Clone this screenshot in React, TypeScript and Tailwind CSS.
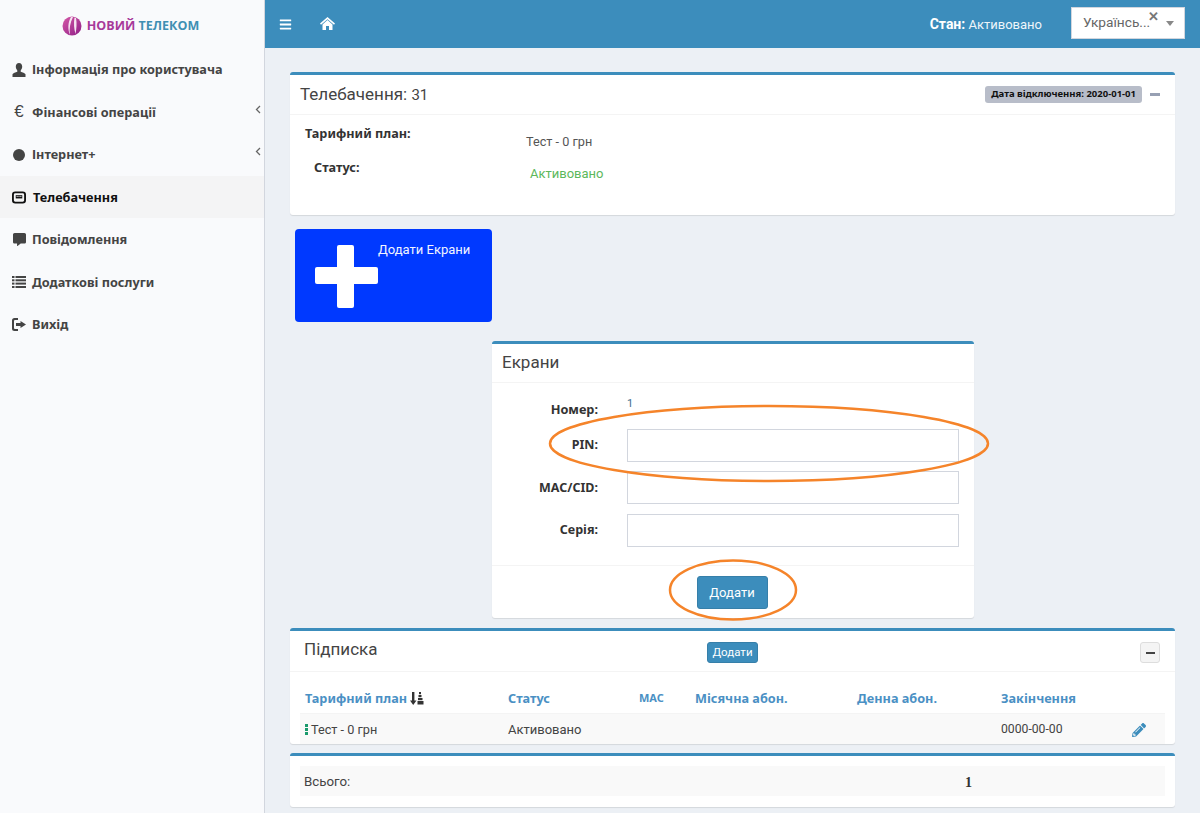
import React from "react";
import { FaBars, FaPencilAlt, FaCommentAlt } from "react-icons/fa";

const reg = "font-['Roboto',sans-serif]";
const bold = "font-['Noto_Sans','Open_Sans',sans-serif] font-bold";

function UserIcon() {
  return (
    <svg width="14" height="14" viewBox="0 0 14 14" fill="#444">
      <path d="M7 0c2 0 3.200 1.500 3.200 3.600 0 1.600-.7 3-1.500 3.800v1.300c1.600.6 4.300 1.300 4.800 2.600V14H.5v-2.700c.5-1.300 3.200-2 4.800-2.600V7.400C4.500 6.600 3.800 5.200 3.800 3.600 3.800 1.500 5 0 7 0z" />
    </svg>
  );
}
function TvIcon() {
  return (
    <svg width="15" height="13" viewBox="0 0 15 13" fill="none">
      <rect x="1" y="1" width="13" height="11" rx="2.500" stroke="#111" strokeWidth="2" />
      <rect x="4" y="4" width="7" height="3.500" fill="#111" />
      <rect x="5" y="4.800" width="1" height="1.200" fill="#f4f4f5" />
      <rect x="7" y="4.800" width="1" height="1.200" fill="#f4f4f5" />
      <rect x="9" y="4.800" width="1" height="1.200" fill="#f4f4f5" />
    </svg>
  );
}
function LogoutIcon() {
  return (
    <svg width="14" height="13" viewBox="0 0 14 13" fill="#444">
      <path d="M2.500 0H6v2H3a1 1 0 0 0-1 1v7a1 1 0 0 0 1 1h3v2H2.500A2.500 2.500 0 0 1 0 10.500v-8A2.500 2.500 0 0 1 2.500 0z" />
      <path d="M8.500 3 14 6.500 8.500 10V8H4V5h4.500z" />
    </svg>
  );
}
function ListIcon() {
  return (
    <svg width="14" height="12" viewBox="0 0 14 12" fill="#444">
      <rect x="0" y="0" width="2.500" height="2" />
      <rect x="3.500" y="0" width="10.500" height="2" />
      <rect x="0" y="3.300" width="2.500" height="2" />
      <rect x="3.500" y="3.300" width="10.500" height="2" />
      <rect x="0" y="6.600" width="2.500" height="2" />
      <rect x="3.500" y="6.600" width="10.500" height="2" />
      <rect x="0" y="10" width="2.500" height="2" />
      <rect x="3.500" y="10" width="10.500" height="2" />
    </svg>
  );
}
function HomeIcon() {
  return (
    <svg width="15" height="13" viewBox="0 0 15 13" fill="#fff">
      <path d="M7.500 0 15 6.600 14 7.800 7.500 2.200 1 7.800 0 6.600z" />
      <path d="M2.500 7.400 7.500 3.100 12.500 7.400V13H9V9H6v4H2.500z" />
    </svg>
  );
}
function SortIcon() {
  return (
    <svg width="14" height="13" viewBox="0 0 14 13" fill="#333">
      <path d="M2 0h2.400v8.500H6.500L3.200 13 0 8.500h2z" />
      <rect x="9" y="0" width="2" height="2.200" />
      <rect x="8.500" y="3" width="3" height="2.200" />
      <rect x="8" y="6" width="4.500" height="2.200" />
      <rect x="7.500" y="9" width="6" height="3.500" />
    </svg>
  );
}

const menu: { label: string; icon: React.ReactNode; chevron?: boolean; active?: boolean }[] = [
  { label: "Інформація про користувача", icon: <UserIcon /> },
  { label: "Фінансові операції", icon: <span className="font-['Liberation_Sans',sans-serif] font-normal text-[17px] leading-none text-[#444] -mt-[2px]">€</span>, chevron: true },
  { label: "Інтернет+", icon: <span className="block w-3 h-3 rounded-full bg-[#444]" />, chevron: true },
  { label: "Телебачення", icon: <TvIcon />, active: true },
  { label: "Повідомлення", icon: <FaCommentAlt size={13} color="#444" /> },
  { label: "Додаткові послуги", icon: <ListIcon /> },
  { label: "Вихід", icon: <LogoutIcon /> },
];

function Logo() {
  return (
    <div className="h-[48px] flex items-center justify-center pt-[4px] pr-[3px]">
      <svg width="20" height="20" viewBox="0 0 20 20">
        <defs>
          <linearGradient id="lg" x1="0" y1="0" x2="1" y2="1">
            <stop offset="0" stopColor="#d65aa8" />
            <stop offset="1" stopColor="#8e1d86" />
          </linearGradient>
        </defs>
        <circle cx="10" cy="10" r="9.500" fill="url(#lg)" />
        <path d="M9 1C6 6 5.500 13 8 19 7 13 8 7 11 1zM12.500 1.500C11.500 7 12 13 13.500 18 14.500 13 15 7 14 2z" fill="#f6e3f1" />
      </svg>
      <span className="ml-[5px] text-[12.500px] font-bold font-['Open_Sans',sans-serif]">
        <span className="text-[#a7399a]">НОВИЙ</span> <span className="text-[#3f8fb3]">ТЕЛЕКОМ</span>
      </span>
    </div>
  );
}

function Sidebar() {
  return (
    <aside className={`w-[265px] shrink-0 bg-[#f9fafc] border-r border-[#d2d6de] ${bold}`}>
      <Logo />
      <nav>
        {menu.map((m) => (
          <div
            key={m.label}
            className={`h-[42.500px] flex items-center pl-[12px] pr-[3px] pt-[1px] ${m.active ? "bg-[#f4f4f5] text-[#111]" : "text-[#444]"}`}
          >
            <span className="w-[14px] flex justify-center shrink-0">{m.icon}</span>
            <span className={`ml-[6px] text-[12.700px] ${m.active ? "ml-[7px]" : ""}`}>{m.label}</span>
            {m.chevron && (
              <svg className="ml-auto -mt-[6px]" width="6" height="9" viewBox="0 0 6 9" fill="none">
                <path d="M5 1 1.500 4.500 5 8" stroke="#666" strokeWidth="1.300" />
              </svg>
            )}
          </div>
        ))}
      </nav>
    </aside>
  );
}

function Header() {
  return (
    <header className={`h-[48px] bg-[#3c8dbc] flex items-center text-white ${reg}`}>
      <FaBars size={13} className="ml-[14px]" />
      <span className="ml-[28px] -mt-[2px]"><HomeIcon /></span>
      <div className="ml-auto mr-[29px] text-[13px] text-[#eef5fa]">
        <b className="text-white text-[14px]">Стан:</b> Активовано
      </div>
      <div className="relative w-[114px] h-[32px] mb-[3px] mr-[15px] bg-white border border-[#d2d6de] text-[#666] text-[13.700px] flex items-center pl-[11px]">
        Українсь...
        <span className="absolute left-[76px] top-[-1px] text-[#777] font-bold text-[13px]">✕</span>
        <span className="absolute right-[10px] top-[13px] w-0 h-0 border-x-[4px] border-x-transparent border-t-[5px] border-t-[#888]" />
      </div>
    </header>
  );
}

function Card({ children, className = "" }: { children: React.ReactNode; className?: string }) {
  return (
    <section className={`bg-white rounded-[3px] border-t-[3px] border-[#3c8dbc] shadow-[0_1px_1px_rgba(0,0,0,0.1)] ${className}`}>
      {children}
    </section>
  );
}

function Field({ label, children }: { label: string; children?: React.ReactNode }) {
  return (
    <div className="flex items-center h-[42.500px]">
      <label className={`w-[106px] text-right text-[12.500px] text-[#333] pt-[1px] ${bold}`}>{label}</label>
      <div className="ml-[29px] flex-1">{children}</div>
    </div>
  );
}

function Input() {
  return <input className="block w-[332px] h-[33px] bg-white border border-[#d2d6de]" />;
}

const cols = "grid grid-cols-[203px_130px_56px_162px_144px_131px_1fr]";

export default function App() {
  return (
    <div className={`w-[1200px] h-[813px] overflow-hidden flex bg-[#ecf0f5] text-[#333] ${reg}`}>
      <Sidebar />
      <div className="flex-1 flex flex-col min-w-0">
        <Header />
        <main className="flex-1 pt-[24px] pl-[25px] pr-[25px] relative">
          <Card className="h-[143px]">
            <div className="h-[40px] border-b border-[#f4f4f4] flex items-center pl-[10px] pr-[15px]">
              <h3 className="text-[17px] text-[#444]">Телебачення: <span className="text-[15px]">31</span></h3>
              <span className={`ml-auto bg-[#b8bdc9] text-[#111] rounded-[3px] text-[9.500px] h-[17px] px-[6px] flex items-center ${bold}`}>Дата відключення: 2020-01-01</span>
              <span className="ml-[8px] w-[10px] h-[3px] bg-[#97a0b3]" />
            </div>
            <div className="flex pt-[9px]">
              <div className={`w-[236px] text-[12.700px] text-[#333] ${bold}`}>
                <div className="pl-[15px]">Тарифний план:</div>
                <div className="pl-[24px] mt-[15px]">Статус:</div>
              </div>
              <div className="text-[12.700px]">
                <div className="mt-[8px] text-[#555]">Тест - 0 грн</div>
                <div className="mt-[13px] ml-[4px] text-[#5cb85c] text-[13px]">Активовано</div>
              </div>
            </div>
          </Card>

          <div className="mt-[14px] ml-[5px] w-[197px] h-[93px] bg-[#0039ff] rounded-[4px] flex text-white">
            <div className="w-[83px] flex pl-[20px] pt-[16px]">
              <svg width="63" height="63" viewBox="0 0 63 63" fill="#fff">
                <rect x="22" y="0" width="17" height="63" rx="2" />
                <rect x="0" y="22" width="63" height="17" rx="2" />
              </svg>
            </div>
            <div className="pt-[11px] text-[13px] text-[#f2f4ff]">Додати Екрани</div>
          </div>

          <div className="flex justify-start mt-[19px] ml-[202px] relative w-[482px]">
            <Card className="w-[482px] h-[277px]">
              <div className="h-[39px] border-b border-[#f4f4f4] pl-[10px] flex items-center text-[#444] text-[17px]">Екрани</div>
              <div className="h-[183px] border-b border-[#f4f4f4]">
                <div className="flex h-[41px] items-end relative pb-[5px]">
                  <label className={`w-[106px] text-right text-[12.700px] text-[#333] ${bold}`}>Номер:</label>
                  <span className="ml-[29px] mb-[7px] text-[11px] text-[#3c6e8f]">1</span>
                </div>
                <Field label="PIN:"><Input /></Field>
                <Field label="MAC/CID:"><Input /></Field>
                <Field label="Серія:"><Input /></Field>
              </div>
              <div className="flex justify-center pt-[10px]">
                <button className="w-[71px] h-[33px] mr-[2px] bg-[#3c8dbc] border border-[#367fa9] rounded-[3px] text-white text-[13px]">Додати</button>
              </div>
            </Card>
            <svg className="absolute left-[55px] top-[62px] pointer-events-none" width="445" height="82" viewBox="0 0 445 82" fill="none">
              <ellipse cx="222" cy="40.500" rx="219" ry="37.500" stroke="#f5842a" strokeWidth="2.500" />
            </svg>
            <svg className="absolute left-[176px] top-[217px] pointer-events-none" width="130" height="64" viewBox="0 0 130 64" fill="none">
              <ellipse cx="65" cy="32" rx="63" ry="29.500" stroke="#f5842a" strokeWidth="2.500" />
            </svg>
          </div>

          <Card className="mt-[10px] h-[116px]">
            <div className="h-[41px] border-b border-[#f4f4f4] relative flex items-center pl-[14px]">
              <span className="text-[17px] text-[#444] -mt-[3px]">Підписка</span>
              <button className="absolute left-[417px] top-[11px] w-[51px] h-[21px] rounded-[3px] bg-[#3c8dbc] border border-[#367fa9] text-white text-[11.500px]">Додати</button>
              <button className="absolute right-[15px] top-[11px] w-[20px] h-[21px] rounded-[3px] bg-[#f4f4f4] border border-[#ddd] flex items-center justify-center">
                <span className="w-[9px] h-[2px] bg-[#444]" />
              </button>
            </div>
            <div className="mx-[10px]">
              <div className={`${cols} h-[41px] items-center pt-[12px] text-[12.700px] text-[#4a90c4] ${bold}`}>
                <div className="pl-[5px] flex items-center gap-[3px]">Тарифний план <SortIcon /></div>
                <div className="pl-[5px]">Статус</div>
                <div className="text-[11px] pl-[6px]">MAC</div>
                <div className="pl-[6px]">Місячна абон.</div>
                <div className="pl-[6px]">Денна абон.</div>
                <div className="pl-[6px]">Закінчення</div>
                <div />
              </div>
              <div className={`${cols} h-[31px] items-center bg-[#f9f9f9] text-[13px] text-[#444] border-t border-[#f4f4f4] pt-[1px]`}>
                <div className="pl-[5px] flex items-center gap-[3px] text-[12.700px]">
                  <span className="flex flex-col gap-[1px]">
                    <span className="block w-[3px] h-[3px] bg-[#1a9a6c]" />
                    <span className="block w-[3px] h-[3px] bg-[#1a9a6c]" />
                    <span className="block w-[3px] h-[3px] bg-[#1a9a6c]" />
                  </span>
                  Тест - 0 грн
                </div>
                <div className="pl-[5px]">Активовано</div>
                <div />
                <div />
                <div />
                <div className="text-[12.200px] pl-[6px]">0000-00-00</div>
                <div className="pl-[6px]"><FaPencilAlt size={14} color="#3c8dbc" /></div>
              </div>
            </div>
          </Card>

          <Card className="mt-[9px] h-[54px]">
            <div className="mx-[10px] mt-[10px] h-[30px] bg-[#f9f9f9] flex items-center text-[13.300px] text-[#444] pl-[4px] pt-[2px]">
              Всього:
              <span className="absolute left-[700px] font-['Liberation_Serif',serif] font-bold text-[#333] text-[14px]">1</span>
            </div>
          </Card>
        </main>
      </div>
    </div>
  );
}
